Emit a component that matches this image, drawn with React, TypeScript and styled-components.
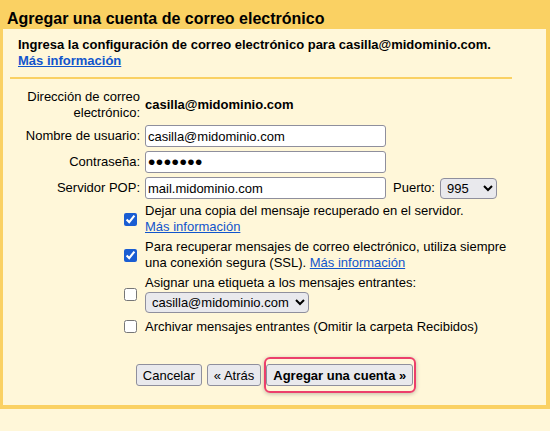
import styled, { createGlobalStyle } from 'styled-components';

const GlobalStyle = createGlobalStyle`
  body {
    margin: 0;
    background: #fff7d9;
    font-family: 'Liberation Sans', Arial, sans-serif;
    font-size: 13px;
    color: #000;
  }
`;

const App = () => {
  return (
    <S.Page>
      <GlobalStyle />
      <S.Frame>
        <S.TitleBar>Agregar una cuenta de correo electrónico</S.TitleBar>
        <S.Panel>
          <S.Intro>
            Ingresa la configuración de correo electrónico para casilla@midominio.com.
            <br />
            <S.Link href="#" $bold>
              Más información
            </S.Link>
          </S.Intro>
          <S.Divider />

          <S.Form>
            <S.Label>
              Dirección de correo
              <br />
              electrónico:
            </S.Label>
            <S.Address>casilla@midominio.com</S.Address>

            <S.Label>Nombre de usuario:</S.Label>
            <S.Field>
              <S.TextInput defaultValue="casilla@midominio.com" />
            </S.Field>

            <S.Label>Contraseña:</S.Label>
            <S.Field>
              <S.TextInput type="password" $masked defaultValue="secreto" />
            </S.Field>

            <S.Label>Servidor POP:</S.Label>
            <S.Field>
              <S.TextInput defaultValue="mail.midominio.com" />
              <S.PortLabel>Puerto:</S.PortLabel>
              <S.Select $width={57} defaultValue="995">
                <option value="110">110</option>
                <option value="995">995</option>
              </S.Select>
            </S.Field>

            <S.CheckCell>
              <S.Checkbox type="checkbox" defaultChecked />
            </S.CheckCell>
            <S.OptionText>
              Dejar una copia del mensaje recuperado en el servidor.
              <br />
              <S.Link href="#">Más información</S.Link>
            </S.OptionText>

            <S.CheckCell>
              <S.Checkbox type="checkbox" defaultChecked />
            </S.CheckCell>
            <S.OptionText>
              Para recuperar mensajes de correo electrónico, utiliza siempre
              <br />
              una conexión segura (SSL). <S.Link href="#">Más información</S.Link>
            </S.OptionText>

            <S.CheckCell>
              <S.Checkbox type="checkbox" />
            </S.CheckCell>
            <S.OptionText>
              Asignar una etiqueta a los mensajes entrantes:
              <br />
              <S.Select $width={164} $offset={1} defaultValue="casilla">
                <option value="casilla">casilla@midominio.com</option>
              </S.Select>
            </S.OptionText>

            <S.CheckCell>
              <S.Checkbox type="checkbox" />
            </S.CheckCell>
            <S.OptionText>Archivar mensajes entrantes (Omitir la carpeta Recibidos)</S.OptionText>
          </S.Form>

          <S.Actions>
            <S.Button>Cancelar</S.Button>
            <S.Button>« Atrás</S.Button>
            <S.Button $primary>Agregar una cuenta »</S.Button>
          </S.Actions>
        </S.Panel>
      </S.Frame>
    </S.Page>
  );
};

const S = {
  Page: styled.div`
    width: 550px;
    min-height: 431px;
    background: #fff7d9;
  `,

  Frame: styled.div`
    background: #fad163;
    padding: 0 4px 4px 3px;
  `,

  TitleBar: styled.h1`
    margin: 0;
    height: 29px;
    box-sizing: border-box;
    padding: 9px 0 0 4px;
    font-size: 16px;
    line-height: 19px;
    font-weight: bold;
  `,

  Panel: styled.div`
    background: #fff7d9;
    padding-bottom: 19px;
  `,

  Intro: styled.p`
    margin: 0;
    padding: 8px 15px 0;
    line-height: 16px;
    font-weight: bold;
  `,

  Link: styled.a<{ $bold?: boolean }>`
    color: #1155cc;
    text-decoration: underline;
    font-weight: ${(props) => (props.$bold ? 'bold' : 'normal')};
  `,

  Divider: styled.hr`
    margin: 8px 0 0 7px;
    width: 502px;
    height: 2px;
    border: none;
    background: #fad163;
  `,

  Form: styled.div`
    display: grid;
    grid-template-columns: 137px 1fr;
    column-gap: 5px;
    row-gap: 4px;
    align-items: center;
    margin-top: 10px;
    line-height: 16px;
  `,

  Label: styled.div`
    text-align: right;
  `,

  Address: styled.div`
    font-weight: bold;
  `,

  Field: styled.div`
    display: flex;
    align-items: center;
  `,

  TextInput: styled.input<{ $masked?: boolean }>`
    width: 241px;
    height: 22px;
    box-sizing: border-box;
    padding: 0 2px;
    border: 1px solid #8f8f9d;
    border-radius: 3px;
    background: #fff;
    font-family: 'Liberation Sans', Arial, sans-serif;
    font-size: ${(props) => (props.$masked ? '21px' : '13px')};
    letter-spacing: ${(props) => (props.$masked ? '0.5px' : 'normal')};
    color: #000;
  `,

  PortLabel: styled.span`
    margin: 0 5px 0 7px;
  `,

  Select: styled.select<{ $width: number; $offset?: number }>`
    width: ${(props) => props.$width}px;
    height: 21px;
    margin-top: ${(props) => props.$offset ?? 0}px;
    padding: 0 2px;
    border: 1px solid #8f8f9d;
    border-radius: 4px;
    background: #e9e9ed;
    font-family: 'Liberation Sans', Arial, sans-serif;
    font-size: 13px;
    color: #000;
  `,

  CheckCell: styled.div`
    display: flex;
    justify-content: flex-end;
  `,

  Checkbox: styled.input`
    width: 13px;
    height: 13px;
    margin: 3px 3px 3px 4px;
    accent-color: #1a5dd2;
  `,

  OptionText: styled.div``,

  Actions: styled.div`
    display: flex;
    justify-content: center;
    gap: 5px;
    margin-top: 28px;
  `,

  Button: styled.button<{ $primary?: boolean }>`
    position: relative;
    height: 22px;
    padding: 0 6px;
    border: 1px solid #8f8f9d;
    border-radius: 3px;
    background: #e9e9ed;
    font-family: 'Liberation Sans', Arial, sans-serif;
    font-size: 13px;
    font-weight: ${(props) => (props.$primary ? 'bold' : 'normal')};
    color: #000;

    ${(props) =>
      props.$primary &&
      `
      &::after {
        content: '';
        position: absolute;
        top: -8px;
        bottom: -8px;
        left: -3px;
        right: -4px;
        border: 2px solid #ec3f6b;
        border-radius: 6px;
        box-shadow: 0 1px 4px rgba(0, 0, 0, 0.25);
        pointer-events: none;
      }
    `}
  `,
};

export default App;
